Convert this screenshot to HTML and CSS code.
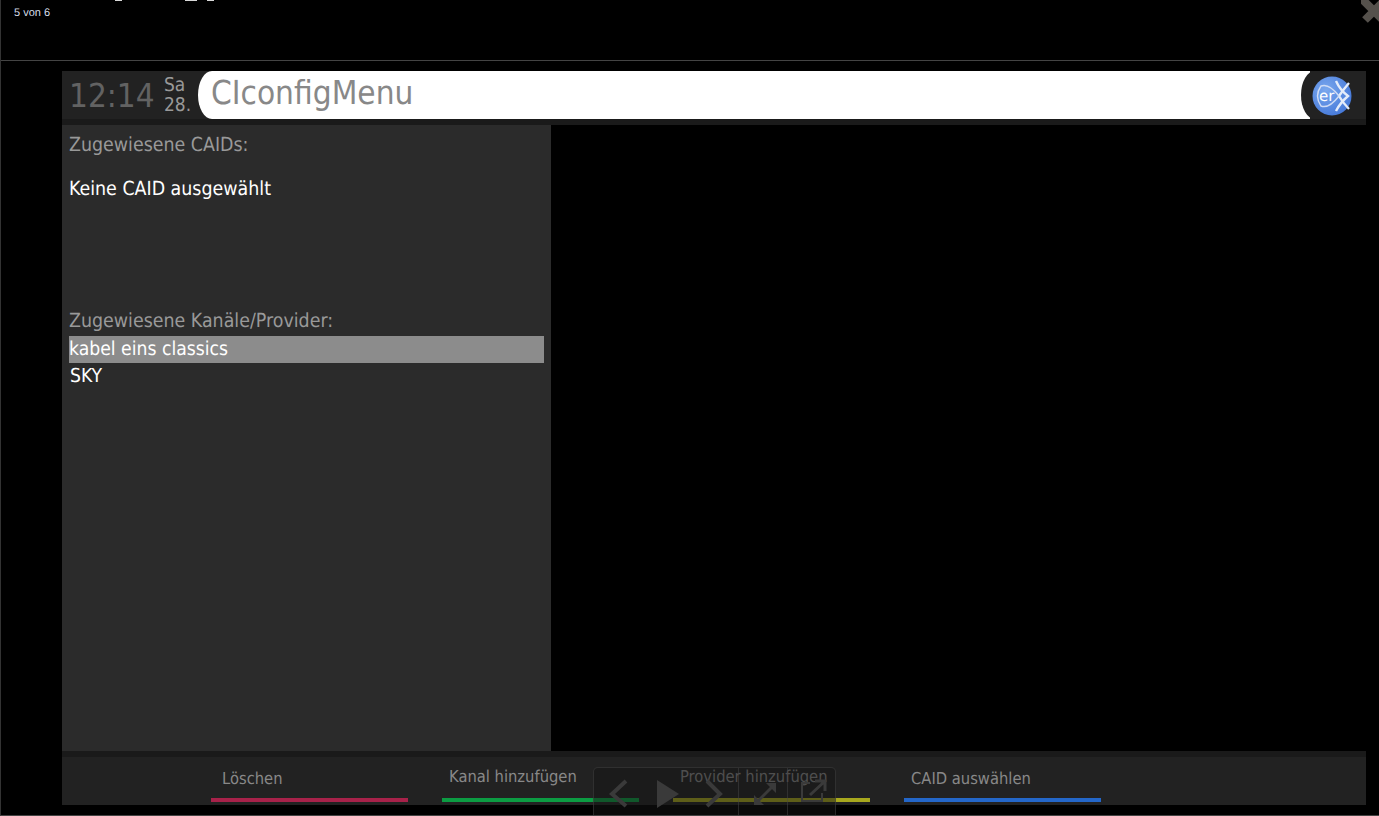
FILE: index.html
```html
<!doctype html>
<html lang="de">
<head>
    <meta charset="UTF-8">
    <title>CIconfigMenu</title>
    <link rel="stylesheet" href="styles.css">
</head>
<body>
    <div class="lightbox">
        <div class="topbar">
            <!-- only the bottom edge of the caption shows in the window -->
            <div class="caption-edge">
                <i class="bit-a"></i>
                <i class="bit-b"></i>
                <i class="bit-c"></i>
            </div>
            <div class="counter">5 von 6</div>
            <svg class="close" width="18" height="26" viewBox="0 0 18 26">
                <path d="M1 -1 L25 23 M25 -1 L4 20" stroke="#55514c" stroke-width="8" fill="none"/>
            </svg>
        </div>

        <div class="screen">
            <div class="header">
                <div class="clock">12:14</div>
                <div class="date">Sa<br>28.</div>
                <div class="title">CIconfigMenu</div>
                <div class="logo-wrap">
                    <svg width="40" height="40" viewBox="0 0 40 40">
                        <defs>
                            <radialGradient id="ball" cx="0.35" cy="0.35" r="0.8">
                                <stop offset="0" stop-color="#7aa8ee"/>
                                <stop offset="1" stop-color="#3f73d6"/>
                            </radialGradient>
                        </defs>
                        <circle cx="20" cy="20" r="19.5" fill="url(#ball)"/>
                        <path d="M24 5 Q28 14 36 20 Q28 27 24 35" stroke="#e4ecfa" stroke-width="2.4" fill="none"/>
                        <path d="M37 7 Q31 14 27 20 Q31 27 37 33" stroke="#e4ecfa" stroke-width="2.4" fill="none"/>
                        <path d="M27 20 Q17 7 9 10 Q2 20 9 30 Q17 33 27 20" stroke="#cfdcf5" stroke-width="1.4" fill="none"/>
                        <text x="7" y="25" class="logo-text">er</text>
                    </svg>
                </div>
            </div>

            <div class="body">
                <div class="panel">
                    <div class="label">Zugewiesene CAIDs:</div>
                    <div class="caids">
                        <div class="item">Keine CAID ausgewählt</div>
                    </div>
                    <div class="label label-list">Zugewiesene Kanäle/Provider:</div>
                    <div class="item selected">kabel eins classics</div>
                    <div class="item">SKY</div>
                </div>
            </div>

            <div class="footer">
                <div class="btn"><span>Löschen</span><i class="red"></i></div>
                <div class="btn"><span>Kanal hinzufügen</span><i class="green"></i></div>
                <div class="btn"><span>Provider hinzufügen</span><i class="yellow"></i></div>
                <div class="btn"><span>CAID auswählen</span><i class="blue"></i></div>
            </div>
        </div>

        <div class="controls">
            <div class="ctrl-main">
                <svg width="144" height="49" viewBox="0 0 144 49">
                    <path d="M32 13 L18 26 L32 38" stroke="#3a3a3a" stroke-width="4" fill="none"/>
                    <path d="M63 12 L85 26 L63 40 Z" fill="#3a3a3a"/>
                    <path d="M113 13 L126 26 L113 38" stroke="#3a3a3a" stroke-width="4" fill="none"/>
                </svg>
            </div>
            <div class="ctrl-btn">
                <svg width="49" height="49" viewBox="0 0 49 49">
                    <path d="M17 35 L35 17" stroke="#3a3a3a" stroke-width="3"/>
                    <path d="M15 27 V37 H25 Z M27 15 H37 V25 Z" fill="#3a3a3a"/>
                </svg>
            </div>
            <div class="ctrl-btn">
                <svg width="48" height="49" viewBox="0 0 48 49">
                    <path d="M22 15 H14 V33 H34 V25" stroke="#3a3a3a" stroke-width="2" fill="none"/>
                    <path d="M22 27 L36 14 M27 13 H37 V23" stroke="#3a3a3a" stroke-width="3" fill="none"/>
                </svg>
            </div>
        </div>
    </div>
</body>
</html>
```

FILE: styles.css
```css
* {
    margin: 0;
    padding: 0;
    box-sizing: border-box;
}

html, body {
    height: 100%;
}

body {
    background-color: #000;
    font-family: "DejaVu Sans Condensed", "DejaVu Sans", sans-serif;
    text-rendering: geometricPrecision;
    overflow: hidden;
}

.lightbox {
    position: relative;
    height: 816px;
    border-left: 1px solid #333;
    border-bottom: 1px solid #444;
    overflow: hidden;
}

.topbar {
    position: relative;
    height: 61px;
    border-bottom: 1px solid #444;
    overflow: hidden;
}

.caption-edge i {
    position: absolute;
    top: 0;
    height: 1px;
    background: #d8d8d8;
}

.bit-a {
    left: 114px;
    width: 7px;
}

.bit-b {
    left: 184px;
    width: 12px;
}

.bit-c {
    left: 206px;
    width: 7px;
}

.counter {
    position: absolute;
    left: 13px;
    top: 7px;
    font-family: "Liberation Sans", sans-serif;
    font-size: 11px;
    color: #d5dde8;
}

.close {
    position: absolute;
    right: 0;
    top: 0;
}

.screen {
    margin: 10px 13px 0 61px;
    display: flex;
    flex-direction: column;
    height: 734px;
    background: #1a1a1a;
}

.header {
    display: flex;
    height: 48px;
    background: #222;
    flex-shrink: 0;
}

.clock {
    width: 102px;
    padding-left: 7px;
    font-size: 33px;
    line-height: 49px;
    color: #626262;
}

.date {
    width: 34px;
    font-size: 19px;
    line-height: 20px;
    padding-top: 4px;
    color: #999;
}

.title {
    flex: 1;
    background: #fff;
    border-radius: 14px 0 0 14px / 24px 0 0 24px;
    padding-left: 13px;
    font-size: 33.1px;
    line-height: 44px;
    color: #888;
}

.logo-wrap {
    width: 65px;
    margin-left: -9px;
    background: #222;
    border-radius: 14px 0 0 14px / 24px 0 0 24px;
    padding: 5px 0 0 11px;
}

.logo-text {
    font-family: "DejaVu Sans", sans-serif;
    font-size: 15px;
    fill: #fff;
}

.body {
    flex: 1;
    margin-top: 6px;
    margin-bottom: 6px;
    background: #000;
}

.panel {
    width: 489px;
    height: 100%;
    background: #2b2b2b;
    padding: 7px 7px 0;
}

.label {
    height: 24px;
    font-size: 19.4px;
    line-height: 25px;
    color: #999;
}

.label-list {
    height: 28px;
    line-height: 25px;
}

.caids {
    height: 152px;
    padding-top: 20px;
}

.item {
    height: 27px;
    padding-left: 1px;
    font-size: 19.2px;
    line-height: 25px;
    color: #fff;
}

.caids .item {
    padding-left: 0;
    font-size: 19.4px;
}

.selected {
    background: #8c8c8c;
    padding-left: 0;
}

.footer {
    display: flex;
    height: 48px;
    padding-left: 149px;
    gap: 34px;
    background: #222;
    flex-shrink: 0;
}

.btn {
    position: relative;
    width: 197px;
}

.btn span {
    display: block;
    padding: 12px 0 0 11px;
    font-size: 16.4px;
    line-height: 20px;
    color: #888;
}

.btn i {
    position: absolute;
    left: 0;
    right: 0;
    bottom: 3px;
    height: 4px;
}

.red {
    background: #a8224a;
}

.green {
    background: #0c9c43;
}

.yellow {
    background: #a8a81e;
}

.blue {
    background: #2467c9;
}

.btn:nth-child(2) span {
    padding-left: 7px;
    padding-top: 10px;
}

.btn:nth-child(3) span {
    padding-left: 7px;
    padding-top: 10px;
}

.btn:nth-child(4) span {
    padding-left: 7px;
}

.controls {
    position: absolute;
    left: 592px;
    top: 767px;
    width: 243px;
    height: 49px;
    display: flex;
    background: rgba(20, 20, 20, 0.5);
    border: 1px solid rgba(70, 70, 70, 0.5);
    border-bottom: none;
    border-radius: 5px 5px 0 0;
}

.ctrl-main {
    width: 144px;
}

.ctrl-btn {
    width: 49px;
    border-left: 1px solid rgba(70, 70, 70, 0.5);
}
```
